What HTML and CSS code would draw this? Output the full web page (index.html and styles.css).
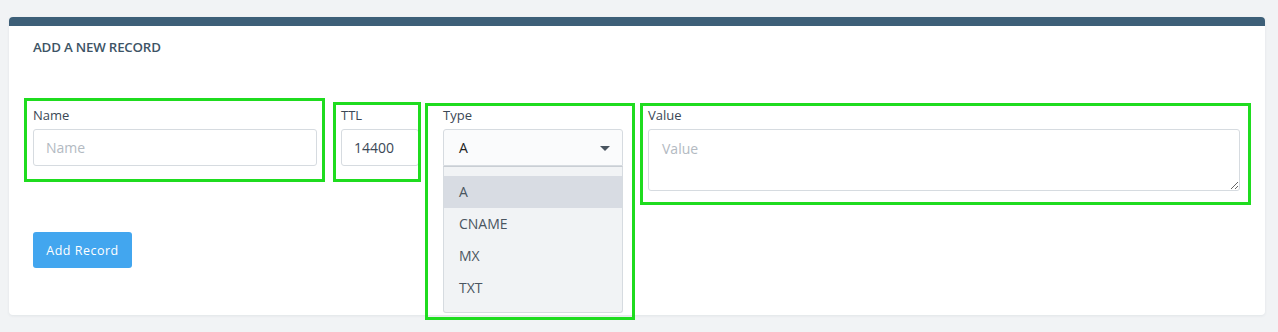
FILE: index.html
```html
<!DOCTYPE html>
<html>
<head>
<meta charset="utf-8">
<link rel="stylesheet" href="styles.css">
</head>
<body>
<div class="page">
  <div class="card">
    <div class="card-bar"></div>
    <div class="card-body">
      <h3 class="title">Add a new record</h3>
      <div class="fields">
        <div class="field f-name">
          <label class="label">Name</label>
          <input class="input" type="text" placeholder="Name">
        </div>
        <div class="field f-ttl">
          <label class="label">TTL</label>
          <input class="input" type="text" value="14400">
        </div>
        <div class="field f-type">
          <label class="label">Type</label>
          <div class="select">
            <span class="select-value">A</span>
            <span class="caret"></span>
          </div>
          <ul class="menu">
            <li class="menu-item active">A</li>
            <li class="menu-item">CNAME</li>
            <li class="menu-item">MX</li>
            <li class="menu-item">TXT</li>
          </ul>
        </div>
        <div class="field f-value">
          <label class="label">Value</label>
          <textarea class="textarea" placeholder="Value"></textarea>
        </div>
      </div>
      <button class="btn">Add Record</button>
    </div>
  </div>
</div>
</body>
</html>
```

FILE: styles.css
```css
* { box-sizing: border-box; }
html, body { margin: 0; padding: 0; }
body {
  background: #f1f3f5;
  font-family: "Open Sans", "Liberation Sans", sans-serif;
  color: #3b4856;
  width: 1278px;
  height: 332px;
  overflow: hidden;
}
.page { padding: 17px 13px 0 9px; }
.card {
  background: #fff;
  border-radius: 4px;
  box-shadow: 0 1px 3px rgba(40, 60, 80, 0.08);
  height: 298px;
  overflow: visible;
}
.card-bar {
  height: 9px;
  background: #3d5f78;
  border-radius: 4px 4px 0 0;
}
.card-body { padding: 0 24px; }
.title {
  margin: 0;
  padding-top: 12px;
  height: 79px;
  font-size: 13.3px;
  font-weight: 600;
  text-transform: uppercase;
  letter-spacing: -0.2px;
  color: #3d5466;
  line-height: 18px;
}
.fields {
  display: flex;
  gap: 24px;
  align-items: flex-start;
}
.field { position: relative; display: flex; flex-direction: column; }
.field::after {
  content: "";
  position: absolute;
  border: 3px solid #1fdc1f;
  pointer-events: none;
  z-index: 5;
}
.label {
  font-size: 13px;
  line-height: 20px;
  height: 20px;
  margin-bottom: 4px;
  color: #3b4856;
}
.input, .textarea, .select {
  font-family: "Open Sans", "Liberation Sans", sans-serif;
  font-size: 14px;
  color: #3b4856;
  border: 1px solid #d6dbe0;
  border-radius: 3px;
  background: #fff;
  outline: none;
}
.input {
  height: 37px;
  padding: 0 12px;
}
.input::placeholder, .textarea::placeholder { color: #b3bac2; }
.f-name { width: 284px; }
.f-name .input { width: 284px; }
.f-name::after { top: -7px; left: -9px; right: -8px; bottom: -16px; }
.f-ttl { width: 78px; }
.f-ttl .input { width: 78px; }
.f-ttl::after { top: -3px; left: -8px; right: -2px; bottom: -16px; }
.f-type { width: 180px; }
.f-type::after { top: -2px; left: -18px; right: -12px; bottom: -154px; }
.select {
  height: 37px;
  background: #fafbfc;
  border-radius: 3px 3px 0 0;
  display: flex;
  align-items: center;
  justify-content: space-between;
  padding: 0 12px 0 15px;
  color: #222;
}
.caret {
  width: 0;
  height: 0;
  border-left: 5px solid transparent;
  border-right: 5px solid transparent;
  border-top: 5px solid #4a5560;
  margin-top: 1px;
}
.menu {
  position: absolute;
  top: 61px;
  left: 0;
  width: 180px;
  margin: 0;
  padding: 9px 0 8px;
  list-style: none;
  background: #f1f3f5;
  border: 1px solid #d6dbe0;
  border-top-color: #c9ced4;
  border-radius: 0 0 3px 3px;
  z-index: 3;
}
.menu-item {
  height: 32px;
  line-height: 32px;
  padding-left: 15px;
  font-size: 14px;
  color: #4a5560;
}
.menu-item.active { background: #d8dce3; }
.f-value { flex: 1; margin-right: 1px; margin-left: 1px; }
.f-value::after { top: -2px; left: -8px; right: -11px; bottom: -14px; }
.textarea {
  height: 62px;
  padding: 9px 13px;
  resize: vertical;
  display: block;
  width: 100%;
}
.btn {
  margin-top: 41px;
  width: 99px;
  height: 36px;
  background: #42a6ef;
  color: #fff;
  border: none;
  border-radius: 3px;
  font-family: "Open Sans", "Liberation Sans", sans-serif;
  font-size: 12.5px;
  font-weight: 500;
  letter-spacing: 0.5px;
  padding: 0;
}
```
